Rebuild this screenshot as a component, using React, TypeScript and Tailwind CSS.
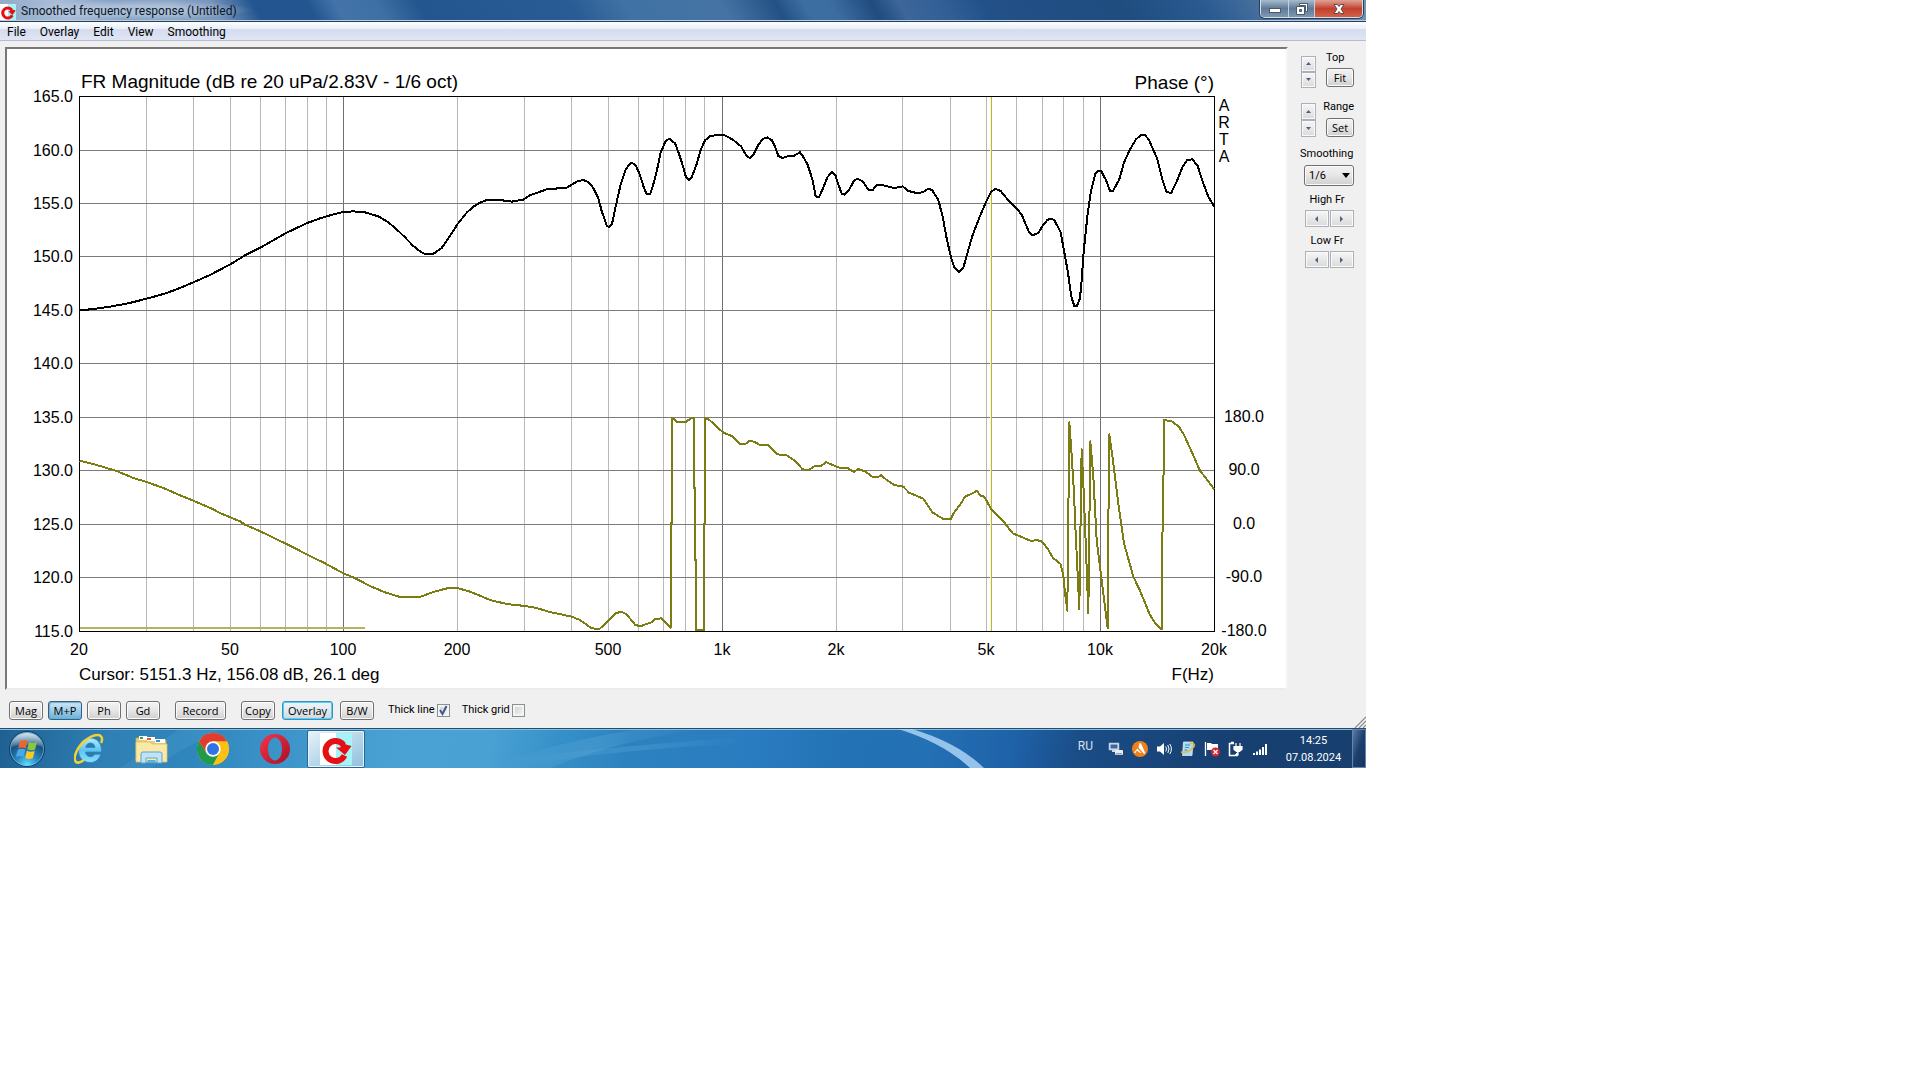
import React from "react";

const UI = "font-['Roboto','Noto_Sans',sans-serif]";

/* ---------- chart data ---------- */

const LEFT = 79;
const TOP = 96;
const BOTTOM = 631;
const RIGHT = 1214;

const FREQS = [30, 40, 50, 60, 70, 80, 90, 100, 200, 300, 400, 500, 600, 700, 800, 900, 1000, 2000, 3000, 4000, 5000, 6000, 7000, 8000, 9000, 10000];
const freqX = (f: number) => Math.floor(79.5 + 378.35 * Math.log10(f / 20));

const ROWS = [96, 150, 203, 256, 310, 363, 417, 470, 524, 577, 631];

const FREQ_LABELS: [number, string][] = [
  [20, "20"], [50, "50"], [100, "100"], [200, "200"], [500, "500"], [1000, "1k"],
  [2000, "2k"], [5000, "5k"], [10000, "10k"], [20000, "20k"],
];

const PHASE_LABELS: [number, string][] = [
  [417, "180.0"], [470, "90.0"], [524, "0.0"], [577, "-90.0"], [631, "-180.0"],
];

/* Both traces are sampled at three units per chart pixel. */
const MAGNITUDE =
  "239,930 275,928 330,920 385,910 440,896 490,882 525,870 580,847 630,825 691,793 735,766 781,743 830,715 856,700 890,684 922,669 960,655 1000,643 1030,636 1060,634 1095,637 1135,649 1165,667 1190,688 1215,712 1240,738 1260,754 1275,762 1298,763 1325,744 1350,708 1372,673 1400,638 1420,620 1440,608 " +
  "1460,600 1500,600 1535,605 1570,599 1590,586 1640,568 1700,563 1730,545 1750,540 1765,546 1780,564 1795,594 1805,633 1820,676 1827,682 1836,672 1848,615 1862,553 1877,508 1890,491 1897,489 1908,498 1920,525 1930,558 1940,583 1950,583 1958,560 1970,515 1982,458 1997,423 2008,416 2025,430 2035,456 2047,492 2058,532 2068,541 2076,530 2090,492 2102,450 2115,421 2130,409 2150,405 2173,405 2200,420 2223,439 2240,468 2250,474 2262,461 2275,434 2290,416 2302,412 2316,421 2326,442 2335,468 2348,474 2362,469 2382,467 2400,457 2408,468 2423,494 2438,541 2447,589 2457,591 2467,570 2482,532 2496,515 2506,525 2515,553 2525,581 2535,584 2548,568 2562,542 2573,536 2588,544 2605,569 2618,570 2632,554 2655,557 2683,564 2708,559 2725,573 2750,579 2768,577 2785,566 2797,571 2815,600 2828,650 2840,715 2852,768 2862,800 2876,816 " +
  "2890,803 2902,760 2918,705 2942,643 2960,602 2974,575 2986,567 3002,573 3030,607 3052,627 3066,646 3086,694 3098,706 3115,699 3128,677 3142,660 3153,656 3163,660 3182,697 3192,752 3204,818 3214,890 3223,918 3231,918 3240,895 3245,840 3251,755 3262,650 3273,572 3286,522 3293,513 3304,514 3318,540 3330,572 3339,573 3358,538 3372,488 3390,448 3408,418 3423,405 3435,405 3447,420 3471,475 3488,541 3500,577 3514,578 3530,545 3548,500 3562,480 3577,478 3593,498 3610,550 3625,590 3643,620";

const PHASE =
  "239,1382 290,1395 350,1413 400,1434 440,1446 490,1464 540,1486 580,1502 640,1528 655,1537 720,1564 735,1574 781,1594 830,1618 870,1637 920,1663 975,1690 1030,1720 1060,1732 1110,1758 1155,1777 1200,1791 1260,1791 1300,1776 1345,1764 1372,1764 1410,1775 1440,1787 1470,1800 1520,1812 1575,1818 1605,1823 1650,1836 1715,1850 1740,1860 1775,1885 1798,1887 1820,1868 1847,1840 1865,1835 1880,1843 1905,1874 1920,1879 1955,1867 1965,1857 1985,1855 2000,1872 2012,1884 " +
  "2013,1570 2016,1570 2016,1253 2030,1265 2058,1265 2072,1256 2081,1254 2082,1465 2085,1465 2085,1680 2088,1680 2089,1890 2112,1890 2112,1572 2115,1572 2115,1255 2125,1257 2170,1298 2195,1308 2220,1331 2238,1331 2246,1323 2262,1325 2278,1334 2305,1335 2333,1363 2360,1366 2385,1382 2408,1408 2427,1410 2443,1399 2465,1397 2478,1386 2495,1394 2520,1404 2545,1405 2562,1416 2575,1407 2595,1414 2618,1431 2635,1431 2643,1425 2660,1440 2683,1455 2710,1460 2727,1478 2770,1496 2797,1537 2830,1557 2852,1557 2865,1533 2880,1515 2895,1490 2918,1480 2931,1472 2942,1488 2953,1490 2974,1528 3010,1563 3038,1600 3060,1609 3093,1623 3110,1620 3125,1624 3143,1646 3160,1675 3181,1691 3190,1725 3194,1770 " +
  "3202,1832 3208,1267 3216,1380 3222,1480 3227,1600 3232,1700 3238,1828 3242,1550 3245,1348 3250,1450 3258,1650 3265,1840 3271,1324 3280,1430 3290,1620 3305,1740 3323,1885 3325,1580 3328,1303 3338,1375 3355,1510 3372,1630 3400,1730 3420,1772 3450,1845 3468,1873 3485,1888 3486,1680 3490,1465 3493,1260 3518,1265 3538,1282 3552,1305 3572,1348 3600,1412 3622,1440 3643,1468";

function Chart() {
  return (
    <svg
      viewBox="7 49 1279 639"
      className="block h-auto w-full bg-white font-['Liberation_Sans',Arial,sans-serif]"
      role="img"
      aria-label="Frequency response magnitude and phase"
    >
      <g shapeRendering="crispEdges">
        {FREQS.map((f) => (
          <rect key={f} x={freqX(f)} y={TOP} width={1} height={BOTTOM - TOP} fill={[100, 1000, 10000].includes(f) ? "#707070" : "#b8b8b8"} />
        ))}
        {ROWS.map((y) => (
          <rect key={y} x={LEFT} y={y} width={RIGHT - LEFT} height={1} fill="#7b7b7b" />
        ))}
        <rect x={LEFT} y={TOP} width={RIGHT - LEFT + 1} height={1} fill="#000" />
        <rect x={LEFT} y={BOTTOM} width={RIGHT - LEFT + 1} height={1} fill="#000" />
        <rect x={LEFT} y={TOP} width={1} height={BOTTOM - TOP} fill="#000" />
        <rect x={RIGHT} y={TOP} width={1} height={BOTTOM - TOP} fill="#000" />
        <rect x={990} y={97} width={1} height={534} fill="#f8f8c8" />
        <rect x={991} y={97} width={1} height={534} fill="#b9b541" />
        <rect x={80} y={627} width={285} height={2} fill="#b4b25c" />
      </g>
      <g transform="scale(0.33333)" fill="none" strokeWidth={6} strokeLinejoin="round" shapeRendering="crispEdges">
        <polyline points={MAGNITUDE} stroke="#000" />
        <polyline points={PHASE} stroke="#7b7d12" />
      </g>
      <g fontSize={19} fill="#000">
        <text x={81} y={88}>FR Magnitude (dB re 20 uPa/2.83V - 1/6 oct)</text>
        <text x={1214} y={89} textAnchor="end">Phase (°)</text>
      </g>
      <g fontSize={17} fill="#000">
        <text x={79} y={680}>Cursor: 5151.3 Hz, 156.08 dB, 26.1 deg</text>
        <text x={1214} y={680} textAnchor="end">F(Hz)</text>
      </g>
      <g fontSize={16} fill="#000">
        {ROWS.map((y, i) => (
          <text key={y} x={73} y={y + 6} textAnchor="end">{(165 - i * 5).toFixed(1)}</text>
        ))}
        {PHASE_LABELS.map(([y, label]) => (
          <text key={label} x={1244} y={y + 5} textAnchor="middle">{label}</text>
        ))}
        {FREQ_LABELS.map(([f, label]) => (
          <text key={label} x={freqX(f)} y={655} textAnchor="middle">{label}</text>
        ))}
        {["A", "R", "T", "A"].map((c, i) => (
          <text key={i} x={1224} y={111 + i * 17} textAnchor="middle">{c}</text>
        ))}
      </g>
    </svg>
  );
}

/* ---------- icons ---------- */

function ArtaIcon({ className }: { className: string }) {
  return (
    <svg viewBox="0 0 32 32" className={className} aria-hidden="true">
      <rect width="16" height="32" fill="#fff" />
      <rect x="16" width="16" height="32" fill="#a4f5f7" />
      <path d="M23.500 12A10 10 0 1 0 24.500 22.500" fill="none" stroke="#e60f14" strokeWidth="6" />
      <path d="M16 14.500h4.500L22 9l4 2.500 5.500 1.500L25 22z" fill="#e60f14" />
    </svg>
  );
}

function StartOrb() {
  return (
    <svg viewBox="0 0 38 38" className="h-[38px] w-[38px]" aria-hidden="true">
      <defs>
        <radialGradient id="orb" cx="50%" cy="95%" r="85%">
          <stop offset="0" stopColor="#5fe0ff" />
          <stop offset=".35" stopColor="#2a8cc4" />
          <stop offset=".75" stopColor="#15507f" />
          <stop offset="1" stopColor="#4a82a8" />
        </radialGradient>
        <linearGradient id="shine" x1="0" y1="0" x2="0" y2="1">
          <stop offset="0" stopColor="#fff" stopOpacity=".75" />
          <stop offset="1" stopColor="#fff" stopOpacity=".1" />
        </linearGradient>
      </defs>
      <circle cx="19" cy="19" r="17.500" fill="url(#orb)" stroke="#0f3d66" />
      <circle cx="19" cy="19" r="16.500" fill="none" stroke="#8fc4dd" strokeOpacity=".6" />
      <path d="M3.500 17C4 8 11 3 19 3s15 5 15.500 14c-8-3-22-3-31 0z" fill="url(#shine)" />
      <path d="M12 11.500c3-1.800 5-1.300 7.500-.2l-1.800 7.200c-2.500-1.200-4.700-1.300-7.500 0z" fill="#f0642c" />
      <path d="M21 12c2.500 1.200 5 1.400 8 .2l-2 7.300c-2.600 1.300-5 1-7.700-.2z" fill="#8cc63f" />
      <path d="M9.800 19.800c2.800-1.500 5-1.200 7.500 0l-1.900 7.100c-2.500-1.200-4.700-1.300-7.500 0z" fill="#4aa8e8" />
      <path d="M18.900 20.700c2.500 1.200 5 1.400 7.900.2l-2 7.200c-2.600 1.300-5 1-7.700-.2z" fill="#fcc826" />
    </svg>
  );
}

function ExplorerE() {
  return (
    <svg viewBox="0 0 32 32" className="h-8 w-8" aria-hidden="true">
      <defs>
        <linearGradient id="ie" x1="0" y1="0" x2="0" y2="1">
          <stop offset="0" stopColor="#b5ecff" />
          <stop offset=".5" stopColor="#5cc4f2" />
          <stop offset="1" stopColor="#8be0ff" />
        </linearGradient>
      </defs>
      <path d="M16 5c7 0 11.500 5 11.500 12.500V19H11.500c.3 3 2.300 4.700 5 4.700 2 0 3.500-1 4.300-2.500h6C25.300 26 21.500 29.500 16.300 29.500 9 29.500 4.500 24.500 4.500 17.300S9.100 5 16 5zm-4.300 9.500h9.300c-.3-2.800-2-4.500-4.600-4.500s-4.300 1.700-4.700 4.500z" fill="url(#ie)" stroke="#2c86be" strokeWidth=".8" />
      <path d="M27.500 9c1.500-4-.3-7.500-4.500-7C15.500 2.500 6 10.500 2.300 19-.5 25.500.5 30.500 5 29.500c1.500-.3 3-1.200 4-2" fill="none" stroke="#f5d032" strokeWidth="2.500" strokeLinecap="round" />
    </svg>
  );
}

function FolderIcon() {
  return (
    <svg viewBox="0 0 34 32" className="h-8 w-[34px]" aria-hidden="true">
      <path d="M1 5h9l1 2h20v20H1z" fill="#e9cd74" stroke="#c9a94c" strokeWidth=".8" />
      <rect x="4" y="3" width="8" height="4" fill="#fff" />
      <rect x="5" y="4" width="3" height="2" fill="#43a047" />
      <rect x="12" y="4" width="8" height="4" fill="#fff" />
      <rect x="12" y="5" width="4" height="2" fill="#e05a2a" />
      <rect x="20" y="6" width="10" height="4" fill="#fff" />
      <rect x="21" y="7" width="4" height="2" fill="#3b8fd6" />
      <path d="M1 9h14l2 2h15v18H1z" fill="#f8e9a8" stroke="#dcc067" strokeWidth=".8" />
      <path d="M6 30V21q0-2 2-2h17q2 0 2 2v9h-5v-5H11v5z" fill="#bfe3f5" stroke="#5fa4d0" />
      <rect x="12.500" y="27" width="8" height="3" fill="#5bb0e0" />
    </svg>
  );
}

function ChromeIcon() {
  return (
    <svg viewBox="0 0 48 48" className="h-8 w-8" aria-hidden="true">
      <circle cx="24" cy="24" r="24" fill="#fbc116" />
      <path d="M3.200 12A24 24 0 0 0 24 48l10-18.300L24 24 14 29.700z" fill="#229a4c" />
      <path d="M24 12.500h20.900A24 24 0 0 1 24 48l10-18.300z" fill="#fbc116" />
      <path d="M3.200 12 14 29.700 24 12.500h20.900A24 24 0 0 0 3.200 12z" fill="#e33b2e" />
      <circle cx="24" cy="24" r="11.500" fill="#fff" />
      <circle cx="24" cy="24" r="9" fill="#2f74e0" />
    </svg>
  );
}

function OperaIcon() {
  return (
    <svg viewBox="0 0 32 32" className="h-8 w-8" aria-hidden="true">
      <defs>
        <linearGradient id="opera" x1="0" y1="0" x2="1" y2="1">
          <stop offset="0" stopColor="#f5364c" />
          <stop offset="1" stopColor="#a80f22" />
        </linearGradient>
      </defs>
      <path fillRule="evenodd" d="M16 1a15 15 0 1 0 0 30 15 15 0 0 0 0-30zm0 3.500c4 0 7 5 7 11.500s-3 11.500-7 11.500S9 22.500 9 16s3-11.500 7-11.500z" fill="url(#opera)" />
    </svg>
  );
}

function TrayIcons() {
  const box = "h-4 w-4 overflow-visible";
  return (
    <>
      <svg viewBox="0 0 16 16" className={box} aria-hidden="true">
        <rect x="1" y="2" width="10" height="7" fill="#dfe9f2" stroke="#9fb3c6" strokeWidth=".6" />
        <rect x="2.500" y="3.500" width="7" height="4" fill="#3b67a8" />
        <path d="M4 9h4v2H4z" fill="#cfd8e0" />
        <rect x="7" y="9" width="8" height="5" rx="1" fill="#e8ecef" />
        <rect x="8" y="12" width="6" height="1.500" fill="#9a9fa5" />
      </svg>
      <svg viewBox="0 0 16 16" className={box} aria-hidden="true">
        <circle cx="8" cy="8" r="8" fill="#f08019" />
        <path d="M7.300 2.500c1-.6 1.800 0 2.200 1l3.600 8.200c.3 1-.8 1.300-1.500.7L6.500 6.500M5.500 7.500l4 4.500H8.200L4.800 9.500 3.700 11.800c-.8.600-1.500 0-1.200-.8z" fill="#fff" />
      </svg>
      <svg viewBox="0 0 16 16" className={box} aria-hidden="true">
        <path d="M1 5.500h3L8 2v12L4 10.500H1z" fill="#fff" />
        <path d="M9.800 5.500q1.400 2.500 0 5M11.800 4q2.500 4 0 8M13.800 3q3.200 5 0 10" fill="none" stroke="#fff" strokeWidth="1" />
      </svg>
      <svg viewBox="0 0 16 16" className={box} aria-hidden="true">
        <path d="M3.500 1H13l-1 13.500H2.500z" fill="#a9dcf0" stroke="#e9f6fb" strokeWidth=".7" />
        <path d="M5 4h5M5 6.500h4M4.500 9h3" stroke="#3a8fc0" />
        <path d="M1 11c5 1.500 11-2 13.500-6.500M9 2.500q5-1 5.500 2" fill="none" stroke="#e8b84a" strokeWidth="1.700" />
      </svg>
      <svg viewBox="0 0 16 16" className={box} aria-hidden="true">
        <path d="M1.500 1v14" stroke="#fff" strokeWidth="1.300" />
        <path d="M3 2h4l1 1h6v6H3z" fill="#fff" />
        <circle cx="11.500" cy="11" r="4.500" fill="#d8242f" />
        <path d="m9.500 9 4 4m0-4-4 4" stroke="#fff" strokeWidth="1.400" />
      </svg>
      <svg viewBox="0 0 16 16" className={box} aria-hidden="true">
        <path d="M6 2.500H1.500v12H9V12M3 1.500h3" fill="none" stroke="#fff" strokeWidth="1.500" />
        <path d="M6 5.500h8v3l-2.500 2h-3L6 8.500zM8 2v3.500M12 2v3.500M10 10.500V14H7" fill="#fff" stroke="#fff" strokeWidth="1.200" />
      </svg>
      <svg viewBox="0 0 16 16" className={box} aria-hidden="true">
        <path d="M1 12h2v2H1zM4 10.500h2V14H4zM7 8.500h2V14H7zM10 6h2v8h-2zM13 3h2v11h-2z" fill="#fff" />
      </svg>
    </>
  );
}

/* ---------- controls ---------- */

function ToolButton({ children, className = "", look = "plain" }: { children: React.ReactNode; className?: string; look?: "plain" | "pressed" | "focus" }) {
  const looks = {
    plain: "border-[#707070] bg-linear-to-b from-[#f3f3f3] via-[#e6e6e6] to-[#cfcfcf] shadow-[inset_0_0_0_1px_#fbfbfb]",
    pressed: "border-[#2c628b] bg-linear-to-b from-[#d0e8f5] via-[#9fcde8] to-[#69b0d8] shadow-[inset_1px_1px_1px_#7fa5bd]",
    focus: "border-[#3c8fb8] bg-linear-to-b from-[#eef4f7] via-[#e2eaee] to-[#cdd8de] shadow-[inset_0_0_0_1px_#4fd0f5]",
  };
  return (
    <button type="button" className={`flex h-[19px] items-center justify-center rounded-[3px] border font-['Open_Sans','Noto_Sans',sans-serif] leading-none text-black ${looks[look]} ${className}`}>
      {children}
    </button>
  );
}

const ARROWS = {
  up: "M1 4h5L3.500 1z",
  down: "M1 1h5L3.500 4z",
  left: "M4 0v6L1 3z",
  right: "M1 0v6l3-3z",
};

function ArrowButton({ dir, label, className }: { dir: keyof typeof ARROWS; label: string; className: string }) {
  return (
    <button type="button" aria-label={label} className={`flex items-center justify-center border border-[#acb0b8] bg-linear-to-b from-[#f6f6f6] to-[#dadada] shadow-[inset_0_0_0_1px_#fafafa] ${className}`}>
      <svg viewBox="0 0 7 6" className="h-[6px] w-[7px]" aria-hidden="true">
        <path d={ARROWS[dir]} fill="#4d6185" />
      </svg>
    </button>
  );
}

function TickBox({ id, label, checked }: { id: string; label: string; checked: boolean }) {
  return (
    <div className="flex items-center gap-[2px]">
      <label htmlFor={id}>{label}</label>
      <span className="grid place-items-center">
        <input id={id} type="checkbox" defaultChecked={checked} className="peer col-start-1 row-start-1 h-[13px] w-[13px] appearance-none border border-[#8e8f8f] bg-linear-to-br from-[#cbcfd5] to-[#f6f6f6] shadow-[inset_0_0_0_2px_#f4f4f4]" />
        <svg viewBox="0 0 11 11" className="pointer-events-none invisible col-start-1 row-start-1 h-[11px] w-[11px] peer-checked:visible" aria-hidden="true">
          <path d="m2 5 2.500 4L8.500 1" fill="none" stroke="#3f5790" strokeWidth="2" />
        </svg>
      </span>
    </div>
  );
}

function TitleBar() {
  return (
    <header className="flex h-[21px] items-start justify-between border-b border-[#b8cde2] bg-[linear-gradient(60deg,#8fa9c8_0%,#a9bdd6_5%,#86a1c4_9%,#8ba5c6_13%,#7895bc_16%,#235690_19%,#235690_23%,#4373a8_25%,#3f70a5_28%,#23568f_31%,#295c94_42%,#4172a5_46%,#4574a4_53%,#235186_57%,#3c6ea2_59%,#3d6da0_61%,#204c80_64%,#3d6699_66%,#315f96_69%,#225088_72%,#1f4d80_82%,#2a5a91_88%,#537ba4_94%,#7295b6_100%)]">
      <div className="flex items-center gap-[5px]">
        <span className="pt-[3px]"><ArtaIcon className="h-4 w-4" /></span>
        <h1 className="bg-[radial-gradient(closest-side,rgba(208,221,236,.5)_40%,rgba(208,221,236,0))] pt-[2px] pr-4 text-[12px] leading-[18px] text-[#0b1626]">
          Smoothed frequency response (Untitled)
        </h1>
      </div>
      <div className="mr-[3px] flex h-[18px] overflow-hidden rounded-b-[5px] border border-t-0 border-[#d5dee8] shadow-[0_0_0_1px_#2b3f55]">
        <button type="button" aria-label="Minimize" className="flex w-7 items-center justify-center border-r border-[#c5d0dc] bg-linear-to-b from-[#a9bccf] via-[#5f7a97] to-[#7f98b2]">
          <svg viewBox="0 0 12 10" className="h-[10px] w-3" aria-hidden="true"><rect x=".5" y="4.500" width="11" height="4" fill="#fff" stroke="#4b5a6b" /></svg>
        </button>
        <button type="button" aria-label="Restore" className="flex w-[26px] items-center justify-center border-r border-[#c5d0dc] bg-linear-to-b from-[#a9bccf] via-[#5f7a97] to-[#7f98b2]">
          <svg viewBox="0 0 14 14" className="h-[14px] w-[14px]" aria-hidden="true">
            <path d="M4.500 1.500h8v8h-2v-6h-6z" fill="#fff" stroke="#4b5a6b" />
            <path fillRule="evenodd" d="M1.500 4.500h8v8h-8zm3 3h2v2h-2z" fill="#fff" stroke="#4b5a6b" />
          </svg>
        </button>
        <button type="button" aria-label="Close" className="flex w-[47px] items-center justify-center bg-linear-to-b from-[#dda296] via-[#c2402c] to-[#d2604a]">
          <svg viewBox="0 0 14 12" className="h-3 w-[14px]" aria-hidden="true">
            <path d="M2 1.500h3.500L7 3.500l1.500-2H12L9 6l3 4.500H8.500L7 8.500l-1.500 2H2L5 6z" fill="#fff" stroke="#5c4a52" />
          </svg>
        </button>
      </div>
    </header>
  );
}

function SidePanel() {
  return (
    <aside className="flex flex-col pr-3 pl-3 text-[11px] leading-4">
      <div className="flex justify-between pt-[3px]">
        <div className="mt-[6px] ml-[1px] flex w-[15px] flex-col">
          <ArrowButton dir="up" label="Top up" className="h-4" />
          <ArrowButton dir="down" label="Top down" className="h-4" />
        </div>
        <div className="flex w-7 flex-col items-start gap-[2px]">
          <span>Top</span>
          <ToolButton className="w-7">Fit</ToolButton>
        </div>
      </div>
      <div className="flex justify-between pt-[11px]">
        <div className="mt-[4px] ml-[1px] flex w-[15px] flex-col">
          <ArrowButton dir="up" label="Range up" className="h-[17px]" />
          <ArrowButton dir="down" label="Range down" className="h-[17px]" />
        </div>
        <div className="flex w-8 flex-col items-end gap-[3px]">
          <span>Range</span>
          <ToolButton className="w-7">Set</ToolButton>
        </div>
      </div>
      <label htmlFor="smoothing" className="pt-[9px]">Smoothing</label>
      <div className="mt-[3px] ml-1 grid items-center">
        <select id="smoothing" defaultValue="1/6" className="col-start-1 row-start-1 h-[21px] appearance-none rounded-[3px] border border-[#707070] bg-linear-to-b from-[#f2f2f2] via-[#e6e6e6] to-[#cfcfcf] pl-1 leading-none shadow-[inset_0_0_0_1px_#fbfbfb]">
          <option>1/3</option>
          <option>1/6</option>
          <option>1/12</option>
        </select>
        <svg viewBox="0 0 8 5" className="pointer-events-none col-start-1 row-start-1 mr-1 h-[5px] w-2 justify-self-end" aria-hidden="true"><path d="M0 0h8L4 5z" fill="#000" /></svg>
      </div>
      {["High Fr", "Low Fr"].map((name) => (
        <div key={name} className="flex flex-col pt-[6px]">
          <span className="text-center">{name}</span>
          <div className="mt-[2px] ml-[5px] flex gap-[1px]">
            <ArrowButton dir="left" label={`${name} down`} className="h-[17px] flex-1" />
            <ArrowButton dir="right" label={`${name} up`} className="h-[17px] flex-1" />
          </div>
        </div>
      ))}
    </aside>
  );
}

function Taskbar() {
  return (
    <footer className="relative flex h-10 items-center overflow-hidden border-t border-[#1d4f74] bg-[linear-gradient(100deg,#1f6091_0%,#2f80b4_8%,#2f86bd_14%,#3f96cb_22%,#4aa2d4_30%,#48a0d3_36%,#3690c8_41%,#2c82bf_46%,#2a7cc0_55%,#2272b5_62%,#2470b4_68%,#1e62a8_74%,#1a4c86_79%,#173f70_90%,#17406f_100%)] shadow-[inset_0_1px_0_#8fbcd9]">
      <svg viewBox="0 0 1366 40" preserveAspectRatio="none" className="pointer-events-none absolute inset-0 h-full w-full" aria-hidden="true">
        <defs>
          <linearGradient id="beam" x1="0" y1="0" x2="1" y2="0">
            <stop offset="0" stopColor="#6cb8e2" stopOpacity="0" />
            <stop offset=".5" stopColor="#6cb8e2" stopOpacity=".25" />
            <stop offset="1" stopColor="#6cb8e2" stopOpacity="0" />
          </linearGradient>
        </defs>
        <path d="M490 40q60-26 150-40h60q-90 14-150 40z" fill="url(#beam)" />
        <path d="M520 30q90-12 230-22l-20 8q-100 4-200 20z" fill="url(#beam)" />
        <path d="M898 0h14q46 14 72 40h-14Q943 14 898 0z" fill="#a9d2f5" fillOpacity=".85" />
        <path d="M180 0h40l-70 40h-30z" fill="#7cc4ea" fillOpacity=".12" />
      </svg>
      <button type="button" aria-label="Start" className="relative ml-2"><StartOrb /></button>
      <button type="button" aria-label="Internet Explorer" className="relative ml-7"><ExplorerE /></button>
      <button type="button" aria-label="Explorer" className="relative ml-[29px]"><FolderIcon /></button>
      <button type="button" aria-label="Chrome" className="relative ml-[28px]"><ChromeIcon /></button>
      <button type="button" aria-label="Opera" className="relative ml-[30px]"><OperaIcon /></button>
      <button type="button" aria-label="ARTA" className="relative ml-4 flex h-[38px] w-[58px] items-center justify-center rounded-[2px] border border-[#2a6690] bg-linear-to-br from-[#e8f3fa] via-[#b9d8ea] to-[#8fc0de] shadow-[inset_0_0_0_1px_#e6f3fb]">
        <ArtaIcon className="h-8 w-8" />
      </button>
      <div className="relative ml-auto flex h-full items-center text-[12px] text-white">
        <span className="pb-[5px] text-[#d5e2f0]">RU</span>
        <div className="ml-[15px] flex items-center gap-2"><TrayIcons /></div>
        <div className="ml-[17px] w-[57px] text-center text-[11px] leading-[17px]">
          <div>14:25</div>
          <div>07.08.2024</div>
        </div>
      </div>
      <button type="button" aria-label="Show desktop" className="relative ml-[10px] h-full w-[14px] border border-[#6585aa] bg-linear-to-br from-[#5b7ba4] via-[#1d3f6e] to-[#163560]" />
    </footer>
  );
}

export default function App() {
  return (
    <div className="min-h-screen bg-white">
      <div className={`w-full max-w-[1366px] text-black ${UI}`}>
        <TitleBar />
        <nav className="flex h-5 items-center gap-[14px] border-t border-b border-t-[#24405e] border-b-[#b6bccc] bg-[linear-gradient(#fdfeff,#e8eef8_38%,#d5dcee_42%,#dfe5f5)] pt-[2px] pl-[7px] text-[12px] leading-none">
          {["File", "Overlay", "Edit", "View", "Smoothing"].map((m) => (
            <button key={m} type="button">{m}</button>
          ))}
        </nav>
        <main className="bg-[#f0f0f0] pt-[6px]">
          <div className="grid grid-cols-[minmax(0,1fr)_78px] pl-[5px]">
            <section className="border-t-2 border-r-2 border-b-2 border-l-2 border-t-[#7a7676] border-r-[#f4f4f4] border-b-[#ececec] border-l-[#7a7676]">
              <Chart />
            </section>
            <SidePanel />
          </div>
          <div className="flex items-end justify-between">
            <div className="flex items-center gap-[5px] pt-[11px] pb-2 pl-[9px] text-[11px]">
              <ToolButton className="w-[34px]">Mag</ToolButton>
              <ToolButton look="pressed" className="w-[34px]">M+P</ToolButton>
              <ToolButton className="w-[34px]">Ph</ToolButton>
              <ToolButton className="w-[34px]">Gd</ToolButton>
              <ToolButton className="ml-[10px] w-[51px]">Record</ToolButton>
              <ToolButton className="mr-[2px] ml-[10px] w-[34px]">Copy</ToolButton>
              <ToolButton look="focus" className="mr-[2px] w-[51px]">Overlay</ToolButton>
              <ToolButton className="w-[34px]">B/W</ToolButton>
              <div className="ml-[9px] flex gap-3">
                <TickBox id="thick-line" label="Thick line" checked />
                <TickBox id="thick-grid" label="Thick grid" checked={false} />
              </div>
            </div>
            <svg viewBox="0 0 12 12" className="h-3 w-3" aria-hidden="true">
              <path d="M1 12 12 1M5 12l7-7M9 12l3-3" stroke="#8a8a8a" strokeWidth="1.200" />
            </svg>
          </div>
        </main>
        <Taskbar />
      </div>
    </div>
  );
}
